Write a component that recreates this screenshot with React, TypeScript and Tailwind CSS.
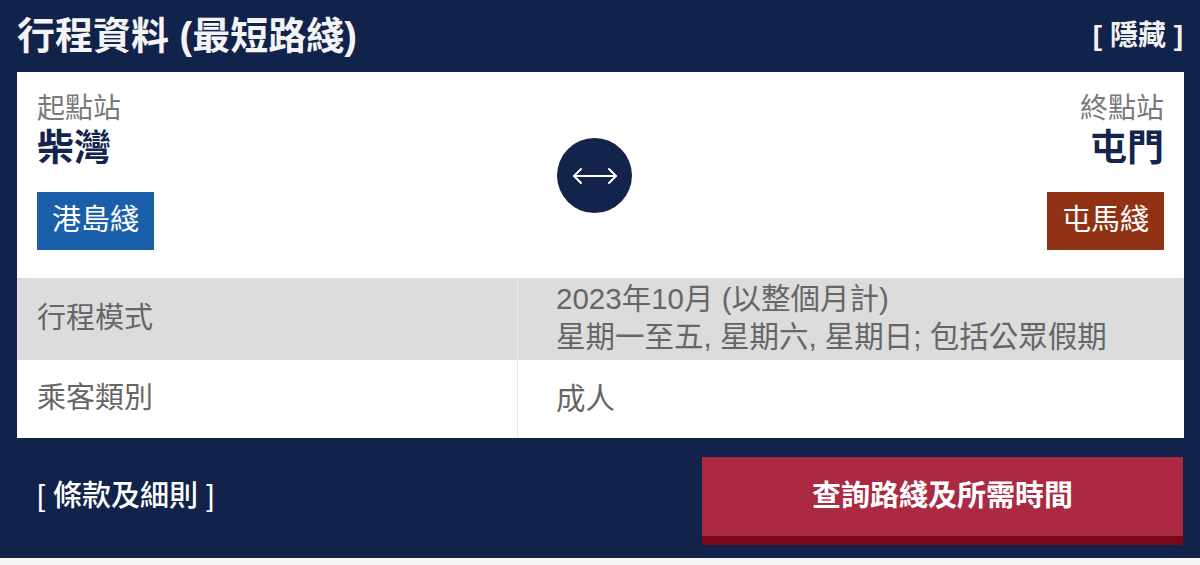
import React from "react";

const FONT = "font-['Liberation_Sans','Noto_Sans_CJK_TC',sans-serif]";

function ArrowIcon() {
  return (
    <svg width="46" height="20" viewBox="0 0 46 20" fill="none" stroke="white" strokeWidth="2" strokeLinecap="round" strokeLinejoin="round">
      <path d="M2 10 H44" />
      <path d="M9 3 L2 10 L9 17" />
      <path d="M37 3 L44 10 L37 17" />
    </svg>
  );
}

export default function App() {
  return (
    <div className={`w-[1200px] h-[565px] bg-[#11224b] flex flex-col overflow-hidden ${FONT}`}>
      <div className="h-[72px] flex items-center justify-between pl-[17px] pr-[17px] shrink-0">
        <div className="text-[#f4f4f4] font-bold text-[38px] leading-none">行程資料 (最短路綫)</div>
        <div className="font-bold text-[28px] leading-none text-[#f2f2f2]">[ 隱藏 ]</div>
      </div>

      <div className="mx-[17px] w-[1167px] bg-white shrink-0">
        <div className="h-[206px] px-[20px] pt-[20px] flex justify-between">
          <div className="flex flex-col items-start w-[200px]">
            <div className="text-[28px] leading-[34px] text-[#7a7a7a]">起點站</div>
            <div className="text-[37px] leading-[46px] font-bold text-[#14244c]">柴灣</div>
            <div className="mt-[20px] w-[117px] h-[58px] bg-[#1b5eaa] flex items-center justify-center text-white text-[29px]">港島綫</div>
          </div>
          <div className="flex items-start pt-[46px] mr-[12px]">
            <div className="w-[75px] h-[75px] rounded-full bg-[#13234b] flex items-center justify-center">
              <ArrowIcon />
            </div>
          </div>
          <div className="flex flex-col items-end w-[200px]">
            <div className="text-[28px] leading-[34px] text-[#7a7a7a]">終點站</div>
            <div className="text-[37px] leading-[46px] font-bold text-[#14244c]">屯門</div>
            <div className="mt-[20px] w-[117px] h-[58px] bg-[#923214] flex items-center justify-center text-white text-[29px]">屯馬綫</div>
          </div>
        </div>

        <div className="grid grid-cols-[501px_1fr] h-[82px] bg-[#dcdcdc] text-[#666666]">
          <div className="flex items-center pl-[20px] text-[29px] border-r border-[#ececec]">行程模式</div>
          <div className="flex flex-col justify-center pl-[38px] text-[29.5px] leading-[38px] pb-[2px]">
            <div>2023年10月 (以整個月計)</div>
            <div>星期一至五, 星期六, 星期日; 包括公眾假期</div>
          </div>
        </div>
        <div className="grid grid-cols-[501px_1fr] h-[78px] bg-white text-[#666666]">
          <div className="flex items-center pl-[20px] text-[29px] border-r border-[#e6e6e6]">乘客類別</div>
          <div className="flex items-center pl-[38px] text-[29.5px]">成人</div>
        </div>
      </div>

      <div className="flex items-start justify-between pl-[37px] pr-[17px] pt-[19px] h-[120px] shrink-0">
        <div className="text-white text-[29px] font-medium mt-[22px] leading-[34px]">[ 條款及細則 ]</div>
        <div className="w-[481px] h-[88px] bg-[#ab2a41] border-b-[9px] border-[#7b0719] flex items-center justify-center text-white font-bold text-[29px]">
          查詢路綫及所需時間
        </div>
      </div>

      <div className="flex-1 bg-[#f4f4f4]" />
    </div>
  );
}
